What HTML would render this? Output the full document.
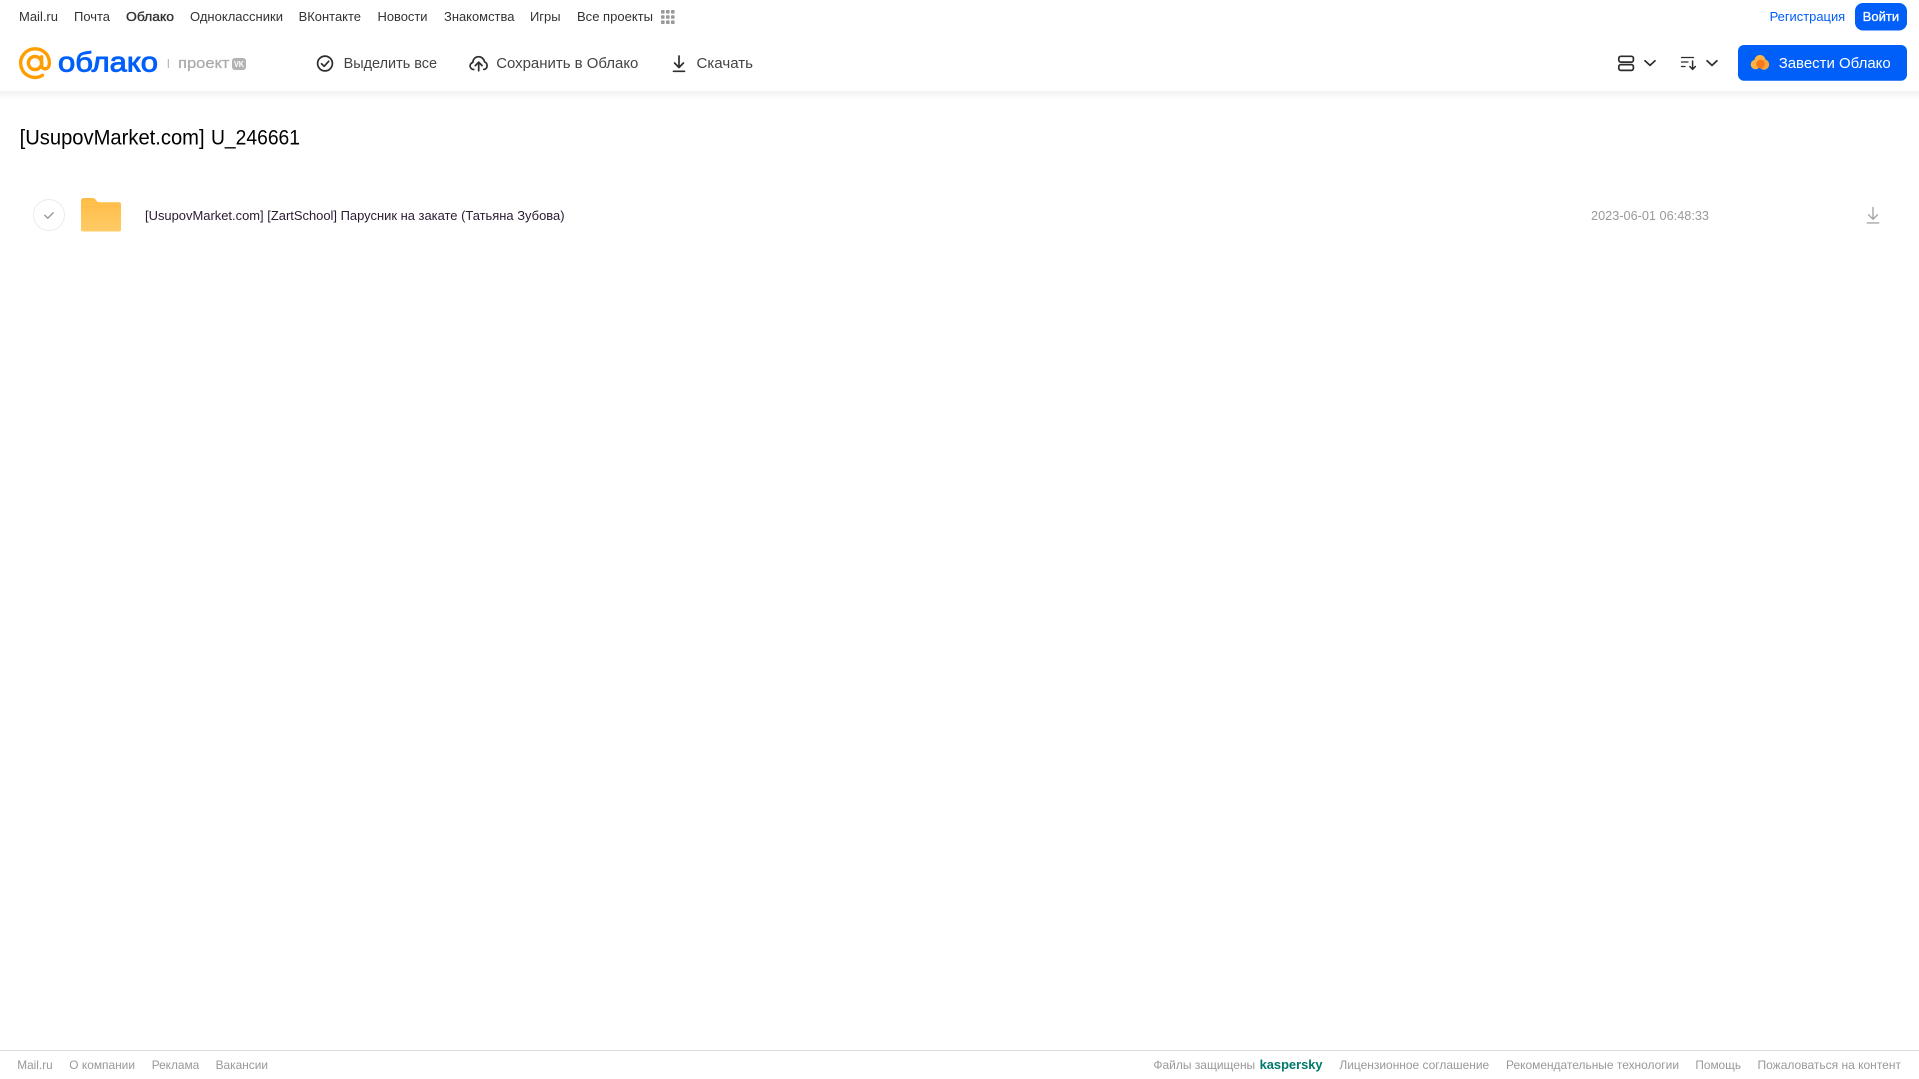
<!DOCTYPE html>
<html lang="ru"><head><meta charset="utf-8"><title>Облако</title>
<style>
html,body{margin:0;padding:0;background:#fff;width:1919px;height:1079px;overflow:hidden}
svg{display:block;position:absolute;left:0;top:0}
text{font-family:"Liberation Sans","Noto Sans CJK SC",sans-serif;white-space:pre}
.t{font-size:13px;fill:#333}
.a{font-size:15px;fill:#444}
.f{font-size:12px;fill:#999}
</style></head><body>
<svg width="1919" height="1079" viewBox="0 0 1919 1079" xmlns="http://www.w3.org/2000/svg">
<defs><linearGradient id="sh" x1="0" y1="0" x2="0" y2="1"><stop offset="0" stop-color="#f2f2f2"/><stop offset="1" stop-color="#fff"/></linearGradient>
<linearGradient id="fo" x1="0" y1="0" x2="0" y2="1"><stop offset="0" stop-color="#ffbd47"/><stop offset="1" stop-color="#ffcb66"/></linearGradient></defs>
<rect x="0" y="91" width="1919" height="9" fill="url(#sh)"/>

<!-- top nav -->
<g class="top">
<text class="t" x="19" y="21" textLength="39" lengthAdjust="spacingAndGlyphs">Mail.ru</text>
<text class="t" x="74" y="21" textLength="36" lengthAdjust="spacingAndGlyphs">Почта</text>
<text class="t" x="126" y="21" textLength="48" lengthAdjust="spacingAndGlyphs" stroke="#333" stroke-width=".35">Облако</text>
<text class="t" x="190" y="21" textLength="93" lengthAdjust="spacingAndGlyphs">Одноклассники</text>
<text class="t" x="298.6" y="21" textLength="62.4" lengthAdjust="spacingAndGlyphs">ВКонтакте</text>
<text class="t" x="377.5" y="21" textLength="50" lengthAdjust="spacingAndGlyphs">Новости</text>
<text class="t" x="444" y="21" textLength="70.4" lengthAdjust="spacingAndGlyphs">Знакомства</text>
<text class="t" x="530" y="21" textLength="30.5" lengthAdjust="spacingAndGlyphs">Игры</text>
<text class="t" x="577" y="21" textLength="76" lengthAdjust="spacingAndGlyphs">Все проекты</text>
</g>
<g fill="#999">
<rect x="661" y="10" width="3.6" height="3.6" rx=".8"/><rect x="666" y="10" width="3.6" height="3.6" rx=".8"/><rect x="671" y="10" width="3.6" height="3.6" rx=".8"/>
<rect x="661" y="15.2" width="3.6" height="3.6" rx=".8"/><rect x="666" y="15.2" width="3.6" height="3.6" rx=".8"/><rect x="671" y="15.2" width="3.6" height="3.6" rx=".8"/>
<rect x="661" y="20.4" width="3.6" height="3.6" rx=".8"/><rect x="666" y="20.4" width="3.6" height="3.6" rx=".8"/><rect x="671" y="20.4" width="3.6" height="3.6" rx=".8"/>
</g>
<text x="1769.6" y="21" font-size="13" fill="#005ff9" textLength="75.6" lengthAdjust="spacingAndGlyphs">Регистрация</text>
<rect x="1855" y="3" width="52" height="27.5" rx="8" fill="#005ff9"/>
<text x="1862.7" y="21" font-size="13" fill="#fff" stroke="#fff" stroke-width=".3" textLength="36.5" lengthAdjust="spacingAndGlyphs">Войти</text>

<!-- logo -->
<g fill="none" stroke="#ff9e00" stroke-width="3.4" stroke-linecap="round">
<circle cx="35" cy="63" r="6.6"/>
<path d="M41.6 56.8V65c0 5.4 7.8 5.4 7.8-2 0-8.2-6.2-14.2-14.4-14.2a14.3 14.3 0 1 0 7.4 26.5"/>
</g>
<text x="58" y="71.5" font-size="28" fill="#005ff9" stroke="#005ff9" stroke-width=".9" stroke-linejoin="round" textLength="100" lengthAdjust="spacingAndGlyphs">облако</text>
<rect x="167.8" y="59" width="1" height="9" fill="#aaa"/>
<text x="178" y="68" font-size="15" fill="#aaa" stroke="#aaa" stroke-width=".25" textLength="51.5" lengthAdjust="spacingAndGlyphs">проект</text>
<rect x="232" y="58" width="14" height="12" rx="3" fill="#b3b3b3"/>
<text x="234" y="67" font-size="8" font-weight="700" fill="#fff" textLength="10" lengthAdjust="spacingAndGlyphs">VK</text>

<!-- actions -->
<g fill="none" stroke="#2c2d2e" stroke-width="1.7" stroke-linecap="round" stroke-linejoin="round">
<circle cx="325" cy="63.5" r="7.4"/>
<path d="M321.5 63.8l2.6 2.5 4.6-5"/>
<path d="M473.7 69.5h-.3c-4 -.5-4.5-6-.6-7 .2-3.4 2.6-5.8 5.8-5.8 3 0 5.4 2.2 6 5.3 3.2 1 3.5 6.5-.4 7.4h-.4"/>
<path d="M478.7 70.8v-8.3M475.3 65.6l3.4-3.4 3.4 3.4"/>
<path d="M679 56v11.5M674.6 63l4.4 4.5 4.4-4.5"/>
<path d="M673.5 71.3h11"/>
</g>
<text class="a" x="343.6" y="68" textLength="93.4" lengthAdjust="spacingAndGlyphs">Выделить все</text>
<text class="a" x="496.2" y="68" textLength="142.2" lengthAdjust="spacingAndGlyphs">Сохранить в Облако</text>
<text class="a" x="696.5" y="68" textLength="56.5" lengthAdjust="spacingAndGlyphs">Скачать</text>

<!-- right icons -->
<g fill="none" stroke="#2c2d2e" stroke-width="1.7" stroke-linecap="round" stroke-linejoin="round">
<rect x="1618.8" y="56.3" width="14.6" height="5.8" rx="2"/>
<rect x="1618.8" y="64.6" width="14.6" height="5.8" rx="2"/>
<path d="M1645 60.8l5 4.6 5-4.6"/>
<path d="M1707 60.8l5 4.6 5-4.6"/>
<path d="M1681.5 57.5h12M1681.5 62h6.5M1681.5 66.5h3.5" stroke-width="1.3"/>
<path d="M1692.6 61v8M1689.8 66.5l2.8 2.8 2.8-2.8" stroke-width="1.5"/>
</g>
<rect x="1738" y="45" width="169" height="35.7" rx="6" fill="#005ff9"/>
<g>
<circle cx="1755.5" cy="64.5" r="4.8" fill="#ffb340"/>
<circle cx="1760" cy="60.5" r="5.5" fill="#ffb340"/>
<circle cx="1764" cy="64.5" r="5.2" fill="#ffa534"/>
<circle cx="1760.5" cy="64" r="4.3" fill="#f9771f"/>
</g>
<text x="1778.7" y="68" font-size="15" fill="#fff" textLength="112" lengthAdjust="spacingAndGlyphs">Завести Облако</text>

<!-- title -->
<text x="19.6" y="144.6" font-size="21" fill="#000" textLength="185" lengthAdjust="spacingAndGlyphs">[UsupovMarket.com]</text>
<text x="211" y="144.6" font-size="21" fill="#000" textLength="89" lengthAdjust="spacingAndGlyphs">U_246661</text>

<!-- row -->
<circle cx="49" cy="215" r="15.5" fill="#fff" stroke="#ececec" stroke-width="1"/>
<path d="M44.8 215.3l3 2.9 5.4-5.4" fill="none" stroke="#999" stroke-width="1.4" stroke-linecap="round" stroke-linejoin="round"/>
<path d="M81 200.5a2.5 2.5 0 0 1 2.5-2.5h8.5c3 0 3.6 1.5 4.8 3 .8 1 1.5 1.2 3 1.2H119a2 2 0 0 1 2 2v25.3a2 2 0 0 1-2 2H83a2 2 0 0 1-2-2z" fill="url(#fo)"/>
<path d="M81 207.2h40v-1h-40z" fill="#f4b03e" opacity=".45"/>
<text x="145" y="220" font-size="13" fill="#2a1a33" textLength="419.5" lengthAdjust="spacingAndGlyphs">[UsupovMarket.com] [ZartSchool] Парусник на закате (Татьяна Зубова)</text>
<text x="1591" y="220" font-size="13" fill="#999" textLength="118" lengthAdjust="spacingAndGlyphs">2023-06-01 06:48:33</text>
<g fill="none" stroke="#a6a6a6" stroke-width="1.4" stroke-linecap="round" stroke-linejoin="round">
<path d="M1873 207.5v11.5M1868.6 214.8l4.4 4.4 4.4-4.4"/>
<path d="M1867.3 222.9h11.4"/>
</g>

<!-- footer -->
<rect x="0" y="1050" width="1919" height="1" fill="#dcdcdc"/>
<text class="f" x="17.3" y="1069" textLength="35.4" lengthAdjust="spacingAndGlyphs">Mail.ru</text>
<text class="f" x="69.3" y="1069" textLength="65.7" lengthAdjust="spacingAndGlyphs">О компании</text>
<text class="f" x="151.7" y="1069" textLength="47.6" lengthAdjust="spacingAndGlyphs">Реклама</text>
<text class="f" x="215.6" y="1069" textLength="52.4" lengthAdjust="spacingAndGlyphs">Вакансии</text>
<text class="f" x="1153.4" y="1069" textLength="101.8" lengthAdjust="spacingAndGlyphs">Файлы защищены</text>
<text x="1259.6" y="1069" font-size="13" font-weight="700" fill="#007a6a" textLength="63" lengthAdjust="spacingAndGlyphs">kaspersky</text>
<text class="f" x="1339.4" y="1069" textLength="149.8" lengthAdjust="spacingAndGlyphs">Лицензионное соглашение</text>
<text class="f" x="1506" y="1069" textLength="173" lengthAdjust="spacingAndGlyphs">Рекомендательные технологии</text>
<text class="f" x="1695.4" y="1069" textLength="45.6" lengthAdjust="spacingAndGlyphs">Помощь</text>
<text class="f" x="1757.5" y="1069" textLength="143.5" lengthAdjust="spacingAndGlyphs">Пожаловаться на контент</text>
</svg>
</body></html>
